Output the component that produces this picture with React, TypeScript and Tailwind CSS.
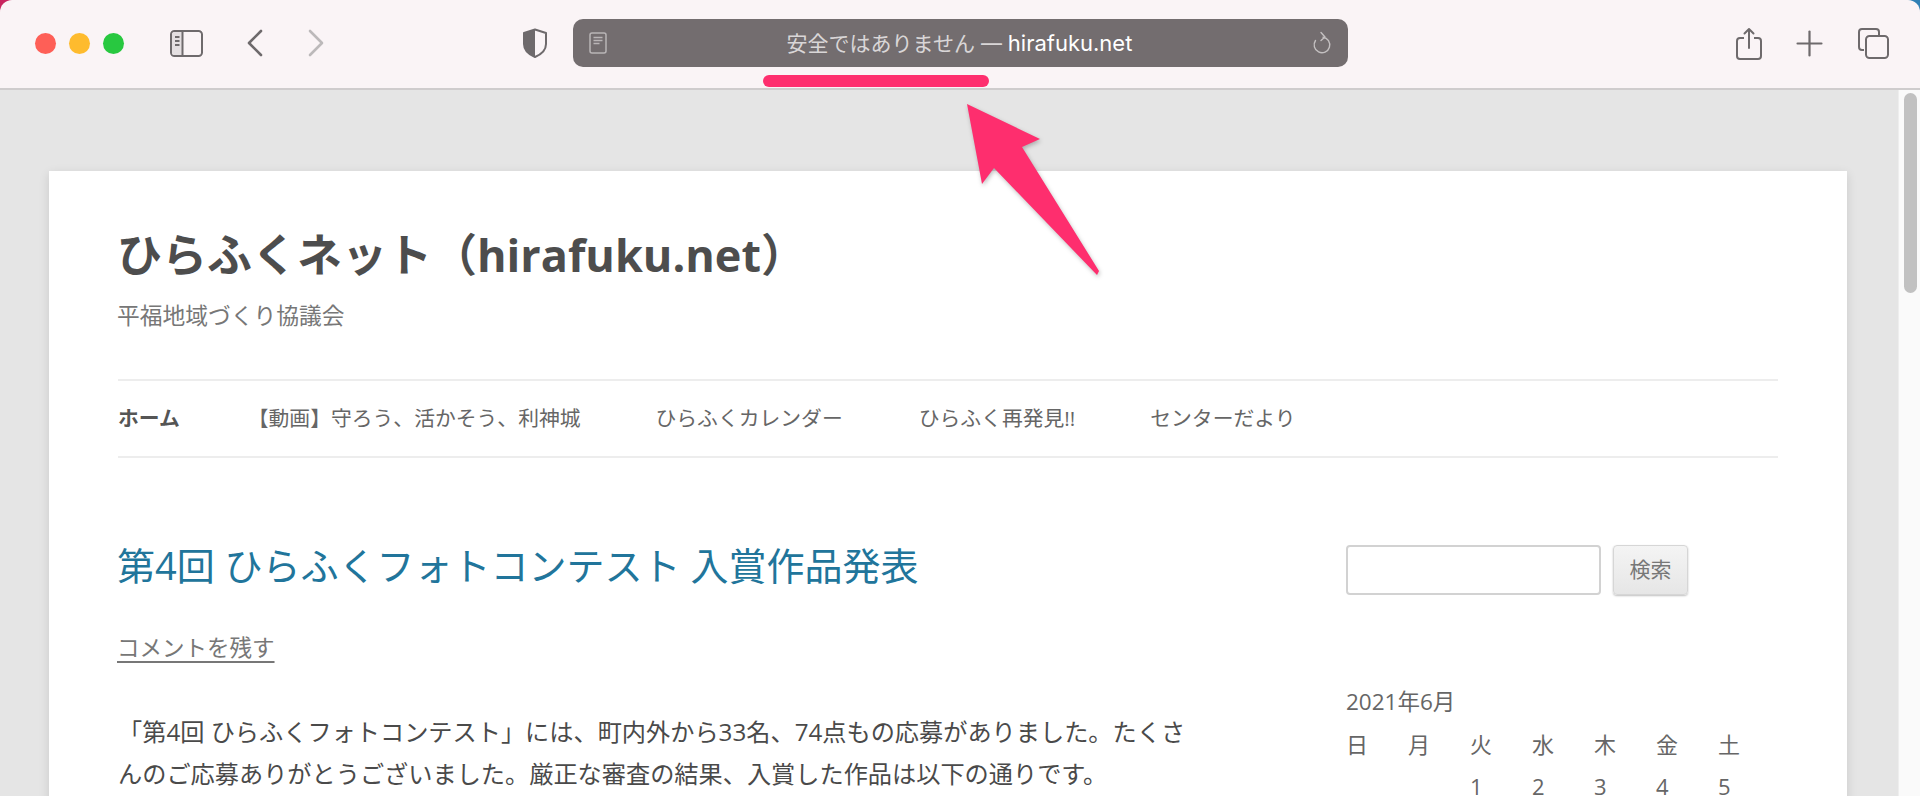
import { ChevronLeft, ChevronRight, Plus } from "lucide-react";

const navItems = [
  { label: "【動画】守ろう、活かそう、利神城", className: "ml-[68px]" },
  { label: "ひらふくカレンダー", className: "ml-[75px]" },
  { label: "ひらふく再発見!!", className: "ml-[76px]" },
  { label: "センターだより", className: "ml-[75px]" },
];

const weekdays = ["日", "月", "火", "水", "木", "金", "土"];
const firstWeek = ["", "", "1", "2", "3", "4", "5"];

const SidebarIcon = () => (
  <svg width="33" height="27" viewBox="0 0 33 27" fill="none" className="ml-[46px]">
    <rect x="1" y="1" width="31" height="25" rx="3.5" stroke="#6e6a6c" strokeWidth="2" />
    <path d="M4.500 2h8v23h-8A2.500 2.500 0 0 1 2 22.500v-18A2.500 2.500 0 0 1 4.500 2z" fill="#e4dfe1" />
    <path d="M12.500 1v25" stroke="#6e6a6c" strokeWidth="2" />
    <path d="M5 7h4.500M5 11h4.500M5 15h4.500" stroke="#6e6a6c" strokeWidth="2" />
  </svg>
);

const ShieldIcon = () => (
  <svg width="26" height="30" viewBox="0 0 26 30" fill="none" className="ml-[182px]">
    <path d="M13 1.500 24 5v11c0 6-5 10.500-11 13C7 26.500 2 22 2 16V5z" fill="#faf4f6" stroke="#6e6a6c" strokeWidth="2" strokeLinejoin="round" />
    <path d="M13 1.500 2 5v11c0 6 5 10.500 11 13z" fill="#6e6a6c" />
  </svg>
);

const PageIcon = () => (
  <svg width="18" height="22" viewBox="0 0 18 22" fill="none">
    <rect x="1" y="1" width="16" height="20" rx="2" stroke="#b9b5b6" strokeWidth="1.500" />
    <path d="M4.500 5.500h9M4.500 8.500h9M4.500 11.500h6" stroke="#b9b5b6" strokeWidth="1.300" />
  </svg>
);

const ReloadIcon = () => (
  <svg width="20" height="24" viewBox="0 0 20 24" fill="none">
    <path d="M11 6.200a7.800 7.800 0 1 1-7.500 3.300" stroke="#c4c0c1" strokeWidth="1.400" strokeLinecap="round" />
    <path d="M9 1.500 13 6 9 9.500" stroke="#c4c0c1" strokeWidth="1.400" strokeLinecap="round" strokeLinejoin="round" />
  </svg>
);

const ShareIcon = () => (
  <svg width="26" height="33" viewBox="0 0 26 33" fill="none" className="ml-[388px]">
    <path d="M8 11H4a3 3 0 0 0-3 3v15a3 3 0 0 0 3 3h18a3 3 0 0 0 3-3V14a3 3 0 0 0-3-3h-4" stroke="#6e6a6c" strokeWidth="2" />
    <path d="M13 21V2M8.500 6.500 13 2l4.500 4.500" stroke="#6e6a6c" strokeWidth="2" strokeLinecap="round" strokeLinejoin="round" />
  </svg>
);

const TabsIcon = () => (
  <svg width="31" height="31" viewBox="0 0 31 31" fill="none" className="ml-[28px]">
    <path d="M6 22H4a3 3 0 0 1-3-3V4a3 3 0 0 1 3-3h14a3 3 0 0 1 3 3v4" stroke="#6e6a6c" strokeWidth="2" />
    <rect x="8" y="8" width="22" height="22" rx="3.500" stroke="#6e6a6c" strokeWidth="2" />
  </svg>
);

// big pink arrow laid over the page
const Arrow = () => (
  <svg
    width="160"
    height="200"
    viewBox="0 0 160 200"
    fill="none"
    className="absolute left-[960px] top-[98px] drop-shadow-[1px_2px_2px_rgba(0,0,0,0.25)]"
  >
    <path d="M7 6 80 41 62 49 139 173 137 177 34 70 22 86z" fill="#fe2e6e" />
  </svg>
);

export default function App() {
  return (
    <div className="relative h-[796px] w-[1920px] overflow-hidden bg-[linear-gradient(90deg,#c8255f_50%,#2f80b5_50%)] font-['Open_Sans','Noto_Sans_CJK_JP',sans-serif]">
      <div className="flex h-full flex-col overflow-hidden rounded-t-[12px]">
        {/* Browser toolbar */}
        <div className="flex h-[90px] shrink-0 items-center border-b-2 border-[#cfcccd] bg-[#faf4f6] pb-[2px] pl-[35px]">
          <div className="flex items-center gap-[13px]">
            <span className="size-[21px] rounded-full bg-[#fe5f57]" />
            <span className="size-[21px] rounded-full bg-[#febb2e]" />
            <span className="size-[21px] rounded-full bg-[#28c840]" />
          </div>
          <SidebarIcon />
          <ChevronLeft size={48} strokeWidth={1.300} color="#6e6a6c" className="ml-[28px]" />
          <ChevronRight size={48} strokeWidth={1.300} color="#bcb9ba" className="ml-[13px]" />
          <ShieldIcon />
          <div className="ml-[25px] flex h-[48px] w-[775px] items-center justify-between rounded-[10px] bg-[#736d6f] px-[16px]">
            <PageIcon />
            <div className="font-['Inter','Noto_Sans_CJK_JP',sans-serif] text-[21px] text-[#d9d6d7]">
              安全ではありません — <span className="text-[22px] text-white">hirafuku.net</span>
            </div>
            <ReloadIcon />
          </div>
          <ShareIcon />
          <Plus size={41} strokeWidth={1.300} color="#6e6a6c" className="ml-[27px]" />
          <TabsIcon />
        </div>

        <div className="flex min-h-0 flex-1">
          {/* Page */}
          <div className="min-w-0 flex-1 bg-[#e5e5e5] pl-[49px] pr-[51px] pt-[81px]">
            <div className="h-[800px] bg-white px-[69px] pt-[50px] shadow-[0_3px_10px_rgba(0,0,0,0.12)]">
              <h1 className="-ml-px text-[45px] font-bold leading-[68px] text-[#4d4d4d]">ひらふくネット（hirafuku.net）</h1>
              <p className="-ml-px mt-[10px] text-[22.750px] leading-[34px] text-[#777]">平福地域づくり協議会</p>
              <nav className="mt-[46px] flex h-[79px] items-center border-y-2 border-[#ededed] text-[20.800px] text-[#666]">
                <span className="font-bold text-[#555]">ホーム</span>
                {navItems.map((item) => (
                  <span key={item.label} className={item.className}>
                    {item.label}
                  </span>
                ))}
              </nav>
              <div className="mt-[78px] flex">
                <div className="w-[1228px] shrink-0">
                  <h2 className="-ml-px text-[38px] leading-[58px] text-[#21759b]">第4回 ひらふくフォトコンテスト 入賞作品発表</h2>
                  <a className="-ml-px mt-[36px] block text-[22.500px] leading-[36px] text-[#777] underline underline-offset-[5px]">コメントを残す</a>
                  <p className="mt-[45px] w-[1081px] text-[24.200px] leading-[42px] text-[#4a4a4a]">
                    「第4回 ひらふくフォトコンテスト」には、町内外から33名、74点もの応募がありました。たくさんのご応募ありがとうございました。厳正な審査の結果、入賞した作品は以下の通りです。
                  </p>
                </div>
                <aside className="flex-1 pt-[9px] text-[#666]">
                  <div className="flex items-stretch gap-[12px]">
                    <input className="h-[50px] w-[255px] rounded-[4px] border-2 border-[#d2d2d2] bg-white" />
                    <button className="h-[50px] w-[75px] rounded-[4px] border border-[#d6d6d6] bg-gradient-to-b from-[#f4f4f4] to-[#e6e6e6] text-[21px] text-[#777] shadow-[0_1px_2px_rgba(0,0,0,0.25)]">
                      検索
                    </button>
                  </div>
                  <div className="mt-[89px] text-[22.500px] leading-[36px]">2021年6月</div>
                  <div className="mt-[3px] grid w-[434px] grid-cols-7 text-[22px] leading-[42px]">
                    {weekdays.map((day) => (
                      <span key={day}>{day}</span>
                    ))}
                    {firstWeek.map((date, i) => (
                      <span key={i}>{date}</span>
                    ))}
                  </div>
                </aside>
              </div>
            </div>
          </div>
          {/* Scrollbar */}
          <div className="w-[22px] shrink-0 border-l border-[#eeeeee] bg-[#fafafa] pl-[5px] pt-[3px]">
            <div className="h-[200px] w-[13px] rounded-full bg-[#c1c1c1]" />
          </div>
        </div>
      </div>

      <div className="absolute left-[763px] top-[75px] h-[12px] w-[226px] rounded-[6px] bg-[#fe2e6e]" />
      <Arrow />
    </div>
  );
}
